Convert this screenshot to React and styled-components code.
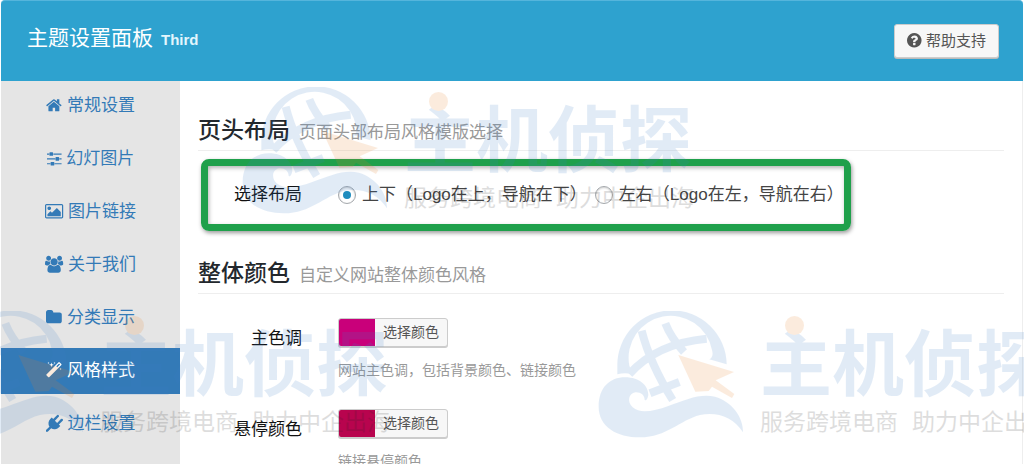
import { useState } from "react";
import styled, { createGlobalStyle } from "styled-components";

const icons = {
  home: {
    box: "64 128 1664 1792",
    d: "M1472 992v480q0 26-19 45t-45 19h-384v-384h-256v384h-384q-26 0-45-19t-19-45v-480q0-1 .5-3t.5-3l575-474 575 474q1 2 1 6zm223-69l-62 74q-8 9-21 11h-3q-13 0-21-7l-692-577-692 577q-12 8-24 7-13-2-21-11l-62-74q-8-10-7-23.5t11-21.5l719-599q32-26 76-26t76 26l244 204v-195q0-14 9-23t23-9h192q14 0 23 9t9 23v408l219 182q10 8 11 21.5t-7 23.5z",
  },
  sliders: {
    box: "0 128 1536 1792",
    d: "M352 1408v128h-352v-128h352zm352-128q26 0 45 19t19 45v256q0 26-19 45t-45 19h-256q-26 0-45-19t-19-45v-256q0-26 19-45t45-19h256zm160-384v128h-864v-128h864zm-640-512v128h-224v-128h224zm1312 1024v128h-736v-128h736zm-960-1152q26 0 45 19t19 45v256q0 26-19 45t-45 19h-256q-26 0-45-19t-19-45v-256q0-26 19-45t45-19h256zm640 512q26 0 45 19t19 45v256q0 26-19 45t-45 19h-256q-26 0-45-19t-19-45v-256q0-26 19-45t45-19h256zm320 128v128h-224v-128h224zm0-512v128h-864v-128h864z",
  },
  picture: {
    box: "-64 128 1920 1792",
    d: "M576 576q0 80-56 136t-136 56-136-56-56-136 56-136 136-56 136 56 56 136zm1024 384v448h-1408v-192l320-320 160 160 512-512zm96-704h-1600q-13 0-22.5 9.5t-9.5 22.5v1216q0 13 9.5 22.5t22.5 9.5h1600q13 0 22.5-9.5t9.5-22.5v-1216q0-13-9.5-22.5t-22.5-9.5zm160 32v1216q0 66-47 113t-113 47h-1600q-66 0-113-47t-47-113v-1216q0-66 47-113t113-47h1600q66 0 113 47t47 113z",
  },
  users: {
    box: "-64 128 1920 1792",
    d: "M529 896q-162 5-265 128h-134q-82 0-138-40.5t-56-118.5q0-353 124-353 6 0 43.5 21t97.5 42.5 119 21.5q67 0 133-23-5 37-5 66 0 139 81 256zm1071 637q0 120-73 189.5t-194 69.5h-874q-121 0-194-69.5t-73-189.5q0-53 3.5-103.5t14-109 26.5-108.5 43-97.5 62-81 85.5-53.5 111.5-20q10 0 43 21.5t73 48 107 48 135 21.5 135-21.5 107-48 73-48 43-21.5q61 0 111.5 20t85.5 53.5 62 81 43 97.5 26.5 108.5 14 109 3.5 103.5zm-1024-1277q0 106-75 181t-181 75-181-75-75-181 75-181 181-75 181 75 75 181zm704 384q0 159-112.5 271.5t-271.5 112.5-271.5-112.5-112.5-271.5 112.5-271.5 271.5-112.5 271.5 112.5 112.5 271.5zm576 225q0 78-56 118.5t-138 40.5h-134q-103-123-265-128 81-117 81-256 0-29-5-66 66 23 133 23 59 0 119-21.5t97.5-42.5 43.5-21q124 0 124 353zm-128-609q0 106-75 181t-181 75-181-75-75-181 75-181 181-75 181 75 75 181z",
  },
  folder: {
    box: "64 128 1664 1792",
    d: "M1728 608v704q0 92-66 158t-158 66h-1216q-92 0-158-66t-66-158v-960q0-92 66-158t158-66h320q92 0 158 66t66 158v32h672q92 0 158 66t66 158z",
  },
  magic: {
    box: "64 128 1664 1792",
    d: "M1254 581l293-293-107-107-293 293zm447-293q0 27-18 45l-1286 1286q-18 18-45 18t-45-18l-198-198q-18-18-18-45t18-45l1286-1286q18-18 45-18t45 18l198 198q18 18 18 45zm-1351-190l98 30-98 30-30 98-30-98-98-30 98-30 30-98zm350 162l196 60-196 60-60 196-60-196-196-60 196-60 60-196zm930 478l98 30-98 30-30 98-30-98-98-30 98-30 30-98zm-640-640l98 30-98 30-30 98-30-98-98-30 98-30 30-98z",
  },
  plug: {
    box: "0 128 1792 1792",
    d: "M1755 453q37 38 37 90.5t-37 90.5l-401 400 150 150-160 160q-163 163-389.5 186.5t-411.5-100.5l-362 362h-181v-181l362-362q-124-185-100.5-411.5t186.5-389.5l160-160 150 150 400-401q38-37 91-37t90 37 37 90.5-37 90.5l-400 401 234 234 401-400q38-37 91-37t90 37z",
  },
  question: {
    box: "128 128 1536 1792",
    d: "M1024 1376v-192q0-14-9-23t-23-9h-192q-14 0-23 9t-9 23v192q0 14 9 23t23 9h192q14 0 23-9t9-23zm256-672q0-88-55.5-163t-138.5-116-170-41q-243 0-371 213-15 24 8 42l132 100q7 6 19 6 16 0 25-12 53-68 86-92 34-24 86-24 48 0 85.5 26t37.5 59q0 38-20 61t-68 45q-63 28-115.5 86.5t-52.5 125.5v36q0 14 9 23t23 9h192q14 0 23-9t9-23q0-19 21.5-49.5t54.5-49.5q32-18 49-28.5t46-35 44.5-48 28-60.5 12.5-81zm384 192q0 209-103 385.5t-279.5 279.5-385.5 103-385.5-103-279.5-279.5-103-385.5 103-385.5 279.5-279.5 385.5-103 385.5 103 279.5 279.5 103 385.5z",
  },
};

const menu = [
  { icon: "home", text: "常规设置" },
  { icon: "sliders", text: "幻灯图片" },
  { icon: "picture", text: "图片链接" },
  { icon: "users", text: "关于我们" },
  { icon: "folder", text: "分类显示" },
  { icon: "magic", text: "风格样式" },
  { icon: "plug", text: "边栏设置" },
];

const layouts = [
  { value: "top", text: "上下（Logo在上，导航在下）" },
  { value: "side", text: "左右（Logo在左，导航在右）" },
];

const colors = [
  { id: "main", label: "主色调", value: "#c9007a", help: "网站主色调，包括背景颜色、链接颜色" },
  { id: "hover", label: "悬停颜色", value: "#b8044e", help: "链接悬停颜色" },
];

const marks = [
  { left: 242, top: 87 },
  { left: -62, top: 311 },
  { left: 598, top: 311 },
];

function Icon({ name }) {
  return (
    <IconSvg viewBox={icons[name].box} aria-hidden="true">
      <path d={icons[name].d} />
    </IconSvg>
  );
}

function Watermark({ left, top }) {
  return (
    <Mark $left={left} $top={top}>
      <MarkLogo viewBox="24 33 438 384">
        <g fill="none" stroke="#3e80ca" strokeWidth="24">
          <path d="M155 92Q180 190 248 300M226 70Q242 112 282 156M118 222Q200 130 350 116M180 280L268 246" />
        </g>
        <path
          fill="#3e80ca"
          d="M82 223V197A164 164 0 0 1 410 193L358 178Q372 170 366 150A126 126 0 0 0 118 197L128 223Q105 216 82 223z"
        />
        <path
          fill="#3e80ca"
          d="M26 320C26 262 60 232 105 232C150 232 175 258 175 285C172 300 168 302 164 300C164 285 152 276 136 277C116 280 110 305 128 322C150 342 190 334 235 318C290 298 330 280 375 290C425 305 460 350 459 397C430 350 380 335 330 345C270 360 230 412 150 412C80 412 26 380 26 320z"
        />
        <path fill="#eb8023" d="M265 165L432 216L377 241L433 282L426 294L366 260L356 273L316 275z" />
      </MarkLogo>
      <MarkText>
        <MarkName>主机侦探</MarkName>
        <MarkSlogan>
          <span>服务跨境电商</span>
          <span>助力中企出海</span>
        </MarkSlogan>
      </MarkText>
      <MarkDot />
    </Mark>
  );
}

function App() {
  const [active, setActive] = useState("magic");
  const [layout, setLayout] = useState("top");

  return (
    <>
      <GlobalStyles />
      <Page>
        <Header>
          <Title>
            主题设置面板 <Version>Third</Version>
          </Title>
          <HelpButton type="button">
            <Icon name="question" />
            帮助支持
          </HelpButton>
        </Header>
        <Body>
          <Sidebar>
            {menu.map((item) => (
              <MenuLink
                key={item.icon}
                href={`#${item.icon}`}
                $active={active === item.icon}
                onClick={() => setActive(item.icon)}
              >
                <Icon name={item.icon} />
                {item.text}
              </MenuLink>
            ))}
          </Sidebar>
          <Content>
            <Heading>
              页头布局 <Sub>页面头部布局风格模版选择</Sub>
            </Heading>
            <Highlight>
              <Field role="radiogroup" aria-labelledby="layout-label">
                <FieldName as="span" id="layout-label">
                  选择布局
                </FieldName>
                <Choices>
                  {layouts.map((item) => (
                    <Choice key={item.value}>
                      <Radio
                        name="layout"
                        value={item.value}
                        checked={layout === item.value}
                        onChange={() => setLayout(item.value)}
                      />
                      {item.text}
                    </Choice>
                  ))}
                </Choices>
              </Field>
            </Highlight>
            <Heading>
              整体颜色 <Sub>自定义网站整体颜色风格</Sub>
            </Heading>
            <Colors>
              {colors.map((color) => (
                <Field key={color.id} $top>
                  <FieldName htmlFor={color.id}>{color.label}</FieldName>
                  <div>
                    <ColorButton id={color.id} type="button">
                      <Swatch $color={color.value} />
                      <ColorText>选择颜色</ColorText>
                    </ColorButton>
                    <Help>{color.help}</Help>
                  </div>
                </Field>
              ))}
            </Colors>
          </Content>
        </Body>
        <Marks aria-hidden="true">
          {marks.map((mark) => (
            <Watermark key={mark.left} {...mark} />
          ))}
        </Marks>
      </Page>
    </>
  );
}

const GlobalStyles = createGlobalStyle`
  * {
    box-sizing: border-box;
  }
  body {
    margin: 0;
    background: #fff;
    color: #333;
    font-family: "Liberation Sans", "Noto Sans CJK SC", sans-serif;
    font-size: 17px;
  }
  button {
    font-family: inherit;
  }
`;
const Page = styled.div`
  position: relative;
  height: 100vh;
  overflow: hidden;
  padding: 0 1px;
  display: flex;
  flex-direction: column;
`;
const Header = styled.header`
  flex: none;
  display: flex;
  align-items: flex-start;
  justify-content: space-between;
  padding: 23px 24px 23px 26px;
  border-top: 1px solid #55b5dc;
  border-radius: 4px 4px 0 0;
  background: #2ea2cf;
`;
const Title = styled.h1`
  display: flex;
  align-items: baseline;
  gap: 8px;
  margin: 0;
  color: #fff;
  font-size: 21px;
  font-weight: 400;
  line-height: 28px;
`;
const Version = styled.small`
  color: #e3f6fd;
  font-size: 15px;
  font-weight: 700;
`;
const IconSvg = styled.svg`
  flex: none;
  height: 17px;
  overflow: visible;
  fill: currentColor;
`;
const HelpButton = styled.button`
  display: flex;
  align-items: center;
  gap: 4px;
  padding: 5px 12px;
  border: 1px solid #ccc;
  border-radius: 3px;
  background: #f7f7f7;
  box-shadow: 0 1px 0 #bbb;
  color: #555;
  font-size: 15px;
  line-height: 22px;
`;
const Body = styled.div`
  flex: none;
  display: flex;
`;
const Sidebar = styled.nav`
  flex: none;
  width: 179px;
  display: flex;
  flex-direction: column;
  gap: 7px;
  padding-top: 2px;
  background: #e5e5e5;
`;
const MenuLink = styled.a`
  display: flex;
  align-items: center;
  justify-content: center;
  gap: 5px;
  padding: 10px 0;
  line-height: 26px;
  text-decoration: none;
  color: ${({ $active }) => ($active ? "#fff" : "#337ab7")};
  background: ${({ $active }) => ($active ? "#337ab7" : "none")};
`;
const Content = styled.main`
  flex: 1;
  min-width: 0;
  padding: 7px 18px 24px;
  border-right: 1px solid #eee;
`;
const Heading = styled.h2`
  display: flex;
  align-items: baseline;
  gap: 9px;
  margin: 27px 0 0;
  padding-bottom: 5px;
  border-bottom: 1px solid #eee;
  color: #23282d;
  font-size: 23px;
  font-weight: 500;
  line-height: 30px;
`;
const Sub = styled.small`
  color: #999;
  font-size: 17px;
  font-weight: 400;
  line-height: 24px;
`;
const Highlight = styled.div`
  width: fit-content;
  margin: 8px 0 0 3px;
  padding: 16px 0;
  border: 7px solid #1fa04b;
  border-radius: 8px;
  box-shadow: 1px 2px 4px rgba(0, 0, 0, 0.4), inset 1px 2px 4px rgba(0, 0, 0, 0.3);
`;
const Field = styled.div`
  display: grid;
  grid-template-columns: 94px auto;
  column-gap: 36px;
  align-items: ${({ $top }) => ($top ? "start" : "center")};
  & > label {
    padding-top: 8px;
  }
`;
const FieldName = styled.label`
  color: #111;
  line-height: 26px;
  text-align: right;
`;
const Choices = styled.div`
  display: flex;
  gap: 8px;
`;
const Choice = styled.label`
  display: flex;
  align-items: center;
  gap: 6px;
  color: #444;
  line-height: 26px;
  white-space: nowrap;
`;
const Radio = styled.input.attrs({ type: "radio" })`
  appearance: none;
  flex: none;
  width: 18px;
  height: 18px;
  margin: 0;
  display: grid;
  place-items: center;
  border: 1px solid #a4a8ac;
  border-radius: 50%;
  background: #fff;
  box-shadow: inset 0 1px 2px rgba(0, 0, 0, 0.2);
  &:checked::before {
    content: "";
    width: 8px;
    height: 8px;
    border-radius: 50%;
    background: #1e8cbe;
  }
`;
const Colors = styled.div`
  display: grid;
  gap: 29px;
  padding: 24px 0 0 10px;
`;
const ColorButton = styled.button`
  display: flex;
  padding: 0;
  overflow: hidden;
  border: 1px solid #ccc;
  border-radius: 3px;
  background: #f7f7f7;
  box-shadow: 0 1px 0 #ccc;
  color: #555;
  font-size: 14px;
  line-height: 27px;
`;
const Swatch = styled.span`
  width: 36px;
  background: ${({ $color }) => $color};
`;
const ColorText = styled.span`
  padding: 0 8px;
`;
const Help = styled.p`
  margin: 13px 0 0;
  color: #999;
  font-size: 14px;
  line-height: 20px;
`;
// tiled brand mark over the whole panel
const Marks = styled.div`
  position: absolute;
  inset: 0;
  overflow: hidden;
  opacity: 0.15;
  pointer-events: none;
`;
const Mark = styled.div`
  position: absolute;
  left: ${({ $left }) => $left}px;
  top: ${({ $top }) => $top}px;
  display: flex;
  gap: 16px;
`;
const MarkLogo = styled.svg`
  flex: none;
  width: 146px;
  height: 128px;
`;
const MarkText = styled.div`
  padding-top: 15px;
  white-space: nowrap;
`;
const MarkName = styled.div`
  color: #3e80ca;
  font-size: 72px;
  font-weight: 700;
  line-height: 78px;
`;
const MarkSlogan = styled.div`
  display: flex;
  gap: 14px;
  color: #222;
  font-size: 23px;
  line-height: 36px;
`;
const MarkDot = styled.i`
  position: absolute;
  left: 187px;
  top: 5px;
  width: 19px;
  height: 19px;
  border-radius: 50%;
  background: #eb8023;
`;

export default App;
